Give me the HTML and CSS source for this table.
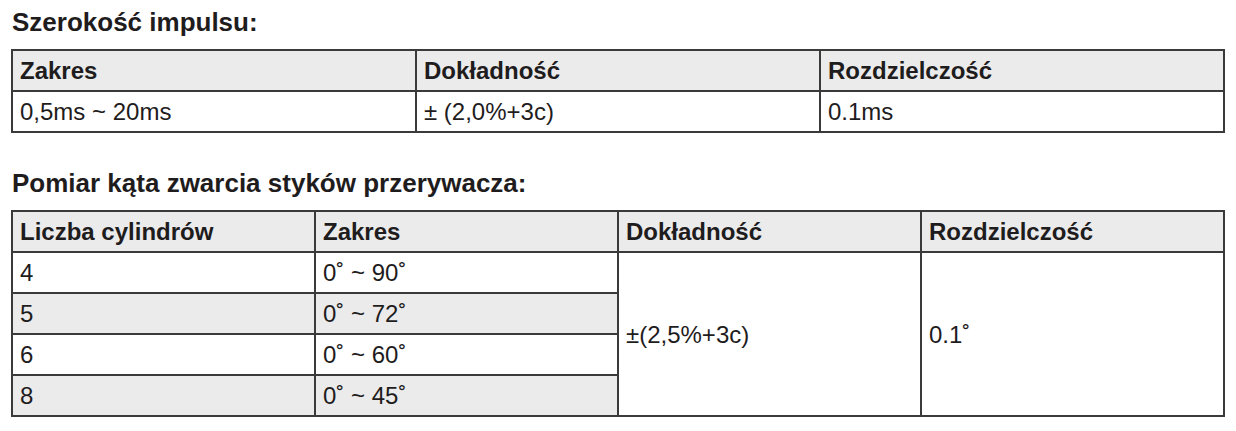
FILE: index.html
```html
<!DOCTYPE html>
<html lang="pl">
<head>
<meta charset="utf-8">
<title>Specyfikacja</title>
<link rel="stylesheet" href="styles.css">
</head>
<body>
<div class="page">
  <h2 class="title first">Szerokość impulsu:</h2>
  <table class="spec cols3">
    <tr class="head"><th>Zakres</th><th>Dokładność</th><th>Rozdzielczość</th></tr>
    <tr><td>0,5ms ~ 20ms</td><td>± (2,0%+3c)</td><td>0.1ms</td></tr>
  </table>

  <h2 class="title second">Pomiar kąta zwarcia styków przerywacza:</h2>
  <table class="spec cols4">
    <tr class="head"><th>Liczba cylindrów</th><th>Zakres</th><th>Dokładność</th><th>Rozdzielczość</th></tr>
    <tr><td>4</td><td>0˚ ~ 90˚</td><td class="merged" rowspan="4">±(2,5%+3c)</td><td class="merged" rowspan="4">0.1˚</td></tr>
    <tr class="alt"><td>5</td><td>0˚ ~ 72˚</td></tr>
    <tr><td>6</td><td>0˚ ~ 60˚</td></tr>
    <tr class="alt"><td>8</td><td>0˚ ~ 45˚</td></tr>
  </table>
</div>
</body>
</html>
```
FILE: styles.css
```css
html, body {
  margin: 0;
  padding: 0;
  background: #ffffff;
}
.page {
  padding: 0 11px 0 11px;
  width: 1214px;
  font-family: "Liberation Sans", Arial, sans-serif;
  color: #1f1c1d;
}
.title {
  font-size: 26px;
  line-height: 30px;
  font-weight: bold;
  margin: 0 0 12px 1px;
}
.title.first {
  margin-top: 7px;
}
.title.second {
  margin-top: 35px;
}
.spec {
  width: 1214px;
  border-collapse: collapse;
  table-layout: fixed;
  font-size: 24px;
}
.spec th,
.spec td {
  border: 2px solid #3a3a3a;
  padding: 0 7px;
  height: 39px;
  line-height: 39px;
  text-align: left;
  vertical-align: middle;
  white-space: nowrap;
}
.spec th {
  font-weight: bold;
}
.spec .head th {
  background: #ebebeb;
}
.spec tr.alt td {
  background: #ebebeb;
}
.spec td.merged {
  background: #ffffff;
}
```
